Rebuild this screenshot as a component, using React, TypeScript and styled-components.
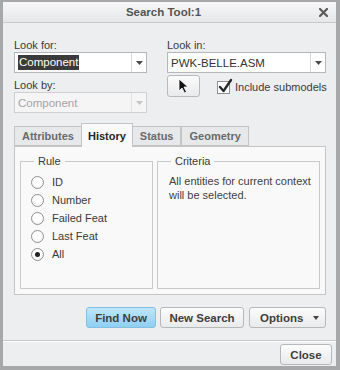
import React from 'react'
import { styled, createGlobalStyle } from 'styled-components'

const GlobalStyle = createGlobalStyle`
  html, body {
    margin: 0;
    padding: 0;
    background: #ffffff;
  }
  body {
    font-family: "Liberation Sans", Arial, sans-serif;
    font-size: 11px;
    color: #3a3a3a;
  }
`;

const Window = styled.div`
  width: 340px;
  height: 370px;
  box-sizing: border-box;
  border-style: solid;
  border-color: #a7a8aa;
  border-width: 2px 4px 4px 3px;
  background: #edeef0;
  display: flex;
  flex-direction: column;
`;

const TitleBar = styled.div`
  height: 20px;
  flex-shrink: 0;
  border-bottom: 1px solid #c9cacc;
  background: linear-gradient(#f7f7f8, #e6e7e9);
  display: flex;
  align-items: center;
  justify-content: center;
  position: relative;
`;

const TitleText = styled.span`
  font-weight: bold;
  font-size: 11.5px;
  color: #545454;
  margin-left: -12px;
`;

const CloseX = styled.svg`
  position: absolute;
  right: 8px;
  top: 6px;
`;

const Content = styled.div`
  padding: 15px 10px 0 11px;
  display: flex;
  flex-direction: column;
`;

const TopGrid = styled.div`
  display: grid;
  grid-template-columns: 133px 159px;
  column-gap: 20px;
`;

const Column = styled.div`
  display: flex;
  flex-direction: column;
`;

const FieldLabel = styled.div<{ $gap?: number }>`
  line-height: 14px;
  height: 14px;
  color: #3a3a3a;
  margin-top: ${({ $gap }) => $gap ?? 0}px;
`;

const Select = styled.div<{ $disabled?: boolean }>`
  height: 21px;
  box-sizing: border-box;
  border: 1px solid ${({ $disabled }) => ($disabled ? '#cfd0d2' : '#b6b7b9')};
  background: ${({ $disabled }) => ($disabled ? '#f5f5f6' : '#ffffff')};
  display: flex;
  align-items: stretch;
`;

const SelectValue = styled.div<{ $disabled?: boolean }>`
  flex: 1;
  display: flex;
  align-items: center;
  padding-left: 3px;
  font-size: 11.5px;
  color: ${({ $disabled }) => ($disabled ? '#a4a4a4' : '#333333')};
  white-space: nowrap;
  overflow: hidden;
`;

const Highlight = styled.span`
  background: #3b3b3b;
  color: #ffffff;
  padding: 0 1px;
  line-height: 15px;
`;

const ArrowBox = styled.div<{ $disabled?: boolean }>`
  width: 14px;
  border-left: 1px solid ${({ $disabled }) => ($disabled ? '#e2e2e3' : '#d6d6d8')};
  display: flex;
  align-items: center;
  justify-content: center;
  color: ${({ $disabled }) => ($disabled ? '#c4c4c4' : '#4a4a4a')};
`;

const PickRow = styled.div`
  display: flex;
  align-items: center;
  margin-top: 2px;
  gap: 17px;
`;

const PickButton = styled.div`
  width: 33px;
  height: 22px;
  flex-shrink: 0;
  box-sizing: border-box;
  border: 1px solid #b8b9bb;
  border-radius: 3px;
  background: linear-gradient(#fbfbfb, #e9eaec);
  display: flex;
  align-items: center;
  justify-content: center;
`;

const CheckRow = styled.label`
  display: flex;
  align-items: center;
  gap: 5px;
  margin-top: 2px;
  white-space: nowrap;
  color: #3a3a3a;
`;

const CheckBox = styled.span`
  width: 13px;
  height: 13px;
  box-sizing: border-box;
  border: 1px solid #8e8f91;
  background: #ffffff;
  position: relative;
  display: inline-block;
  flex-shrink: 0;
`;

const CheckMark = styled.svg`
  position: absolute;
  left: 0px;
  top: -4px;
`;

const TabStrip = styled.div`
  display: flex;
  align-items: flex-end;
  margin-top: 10px;
  height: 23px;
`;

const Tab = styled.div<{ $active?: boolean }>`
  height: ${({ $active }) => ($active ? 24 : 20)}px;
  box-sizing: border-box;
  padding: 0 ${({ $active }) => ($active ? 6 : 7)}px;
  border: 1px solid #c3c4c6;
  border-bottom: ${({ $active }) => ($active ? 'none' : '1px solid #c3c4c6')};
  margin-left: ${({ $active }) => ($active ? -1 : 0)}px;
  margin-right: ${({ $active }) => ($active ? -1 : 0)}px;
  margin-bottom: ${({ $active }) => ($active ? -1 : 0)}px;
  background: ${({ $active }) => ($active ? '#f9f9fa' : '#e7e8ea')};
  color: ${({ $active }) => ($active ? '#262626' : '#6a6a6a')};
  font-weight: bold;
  font-size: 11px;
  display: flex;
  align-items: center;
  position: relative;
  z-index: ${({ $active }) => ($active ? 1 : 0)};
  & + & {
    border-left: ${({ $active }) => ($active ? '1px solid #c3c4c6' : 'none')};
  }
`;

const Panel = styled.div`
  height: 149px;
  box-sizing: border-box;
  border: 1px solid #c3c4c6;
  background: #f9f9fa;
  padding: 7px 5px 0 5px;
  display: grid;
  grid-template-columns: 133px 163px;
  column-gap: 4px;
`;

const Group = styled.fieldset`
  margin: 0;
  height: 135px;
  box-sizing: border-box;
  border: 1px solid #c8c9cb;
  padding: 0;
  min-width: 0;
`;

const Legend = styled.legend`
  margin-left: 13px;
  padding: 0 4px;
  line-height: 14px;
  color: #3a3a3a;
`;

const RadioList = styled.div`
  padding: 5px 0 0 10px;
  display: flex;
  flex-direction: column;
`;

const RadioRow = styled.div`
  height: 18px;
  display: flex;
  align-items: center;
  gap: 8px;
  color: #3a3a3a;
`;

const Radio = styled.span<{ $checked?: boolean }>`
  width: 13px;
  height: 13px;
  box-sizing: border-box;
  border-radius: 50%;
  border: 1px solid #8f9092;
  background: radial-gradient(circle at 50% 40%, #ffffff 40%, #ececec 100%);
  display: inline-flex;
  align-items: center;
  justify-content: center;
  &::after {
    content: '';
    width: 5px;
    height: 5px;
    border-radius: 50%;
    background: #222222;
    display: ${({ $checked }) => ($checked ? 'block' : 'none')};
  }
`;

const CriteriaText = styled.div`
  padding: 6px 0 0 11px;
  line-height: 14px;
  color: #3f3f3f;
`;

const ActionRow = styled.div`
  display: flex;
  justify-content: flex-end;
  gap: 4px;
  margin-top: 12px;
`;

const Button = styled.div<{ $primary?: boolean; $width: number }>`
  width: ${({ $width }) => $width}px;
  height: 21px;
  box-sizing: border-box;
  border: 1px solid ${({ $primary }) => ($primary ? '#86bedf' : '#b7b8ba')};
  border-radius: 3px;
  background: ${({ $primary }) =>
    $primary ? 'linear-gradient(#bfe6fb, #8ecff3)' : 'linear-gradient(#fcfcfc, #e9eaec)'};
  color: #3e3e3e;
  font-weight: bold;
  font-size: 11.5px;
  display: flex;
  align-items: center;
  justify-content: center;
  position: relative;
`;

const MenuButton = styled(Button)`
  justify-content: flex-start;
  padding-left: 10px;
  margin-left: 1px;
`;

const MenuArrow = styled.svg`
  position: absolute;
  right: 6px;
  top: 8px;
`;

const Footer = styled.div`
  margin-top: auto;
  height: 26px;
  flex-shrink: 0;
  border-top: 1px solid #c6c7c9;
  box-shadow: inset 0 1px 0 #ffffff;
  display: flex;
  align-items: flex-start;
  justify-content: flex-end;
  padding: 3px 4px 0 0;
  box-sizing: border-box;
`;

const Arrow = ({ color }: { color?: string }) => (
  <svg width="7" height="4" viewBox="0 0 7 4">
    <polygon points="0,0 7,0 3.5,4" fill={color || 'currentColor'} />
  </svg>
)

const rules = ['ID', 'Number', 'Failed Feat', 'Last Feat', 'All']

export default function App() {
  return (
    <>
      <GlobalStyle />
      <Window>
        <TitleBar>
          <TitleText>Search Tool:1</TitleText>
          <CloseX width="9" height="9" viewBox="0 0 9 9">
            <path d="M1 1 L8 8 M8 1 L1 8" stroke="#5a5a5a" strokeWidth="2.2" strokeLinecap="square" />
          </CloseX>
        </TitleBar>

        <Content>
          <TopGrid>
            <Column>
              <FieldLabel>Look for:</FieldLabel>
              <Select>
                <SelectValue>
                  <Highlight>Component</Highlight>
                </SelectValue>
                <ArrowBox><Arrow /></ArrowBox>
              </Select>
              <FieldLabel $gap={5}>Look by:</FieldLabel>
              <Select $disabled>
                <SelectValue $disabled>Component</SelectValue>
                <ArrowBox $disabled><Arrow /></ArrowBox>
              </Select>
            </Column>
            <Column>
              <FieldLabel>Look in:</FieldLabel>
              <Select>
                <SelectValue>PWK-BELLE.ASM</SelectValue>
                <ArrowBox><Arrow /></ArrowBox>
              </Select>
              <PickRow>
                <PickButton>
                  <svg width="11" height="16" viewBox="0 0 11 16">
                    <path d="M1 1 L1 13 L4 10 L6.5 15 L8.5 14 L6 9 L10 9 Z" fill="#111" stroke="#fff" strokeWidth="0.8" strokeLinejoin="round" />
                  </svg>
                </PickButton>
                <CheckRow>
                  <CheckBox>
                    <CheckMark width="15" height="16" viewBox="0 0 15 16">
                      <path d="M2 9 L5.5 13 L13 2" fill="none" stroke="#2a2a2a" strokeWidth="2.4" strokeLinecap="round" strokeLinejoin="round" />
                    </CheckMark>
                  </CheckBox>
                  Include submodels
                </CheckRow>
              </PickRow>
            </Column>
          </TopGrid>

          <TabStrip>
            <Tab>Attributes</Tab>
            <Tab $active>History</Tab>
            <Tab>Status</Tab>
            <Tab>Geometry</Tab>
          </TabStrip>
          <Panel>
            <Group>
              <Legend>Rule</Legend>
              <RadioList>
                {rules.map((r) => (
                  <RadioRow key={r}>
                    <Radio $checked={r === 'All'} />
                    {r}
                  </RadioRow>
                ))}
              </RadioList>
            </Group>
            <Group>
              <Legend>Criteria</Legend>
              <CriteriaText>All entities for current context will be selected.</CriteriaText>
            </Group>
          </Panel>

          <ActionRow>
            <Button $primary $width={70}>Find Now</Button>
            <Button $width={84}>New Search</Button>
            <MenuButton $width={77}>
              Options
              <MenuArrow width="6" height="4" viewBox="0 0 6 4">
                <polygon points="0,0 6,0 3,4" fill="#444" />
              </MenuArrow>
            </MenuButton>
          </ActionRow>
        </Content>

        <Footer>
          <Button $width={52}>Close</Button>
        </Footer>
      </Window>
    </>
  )
}
